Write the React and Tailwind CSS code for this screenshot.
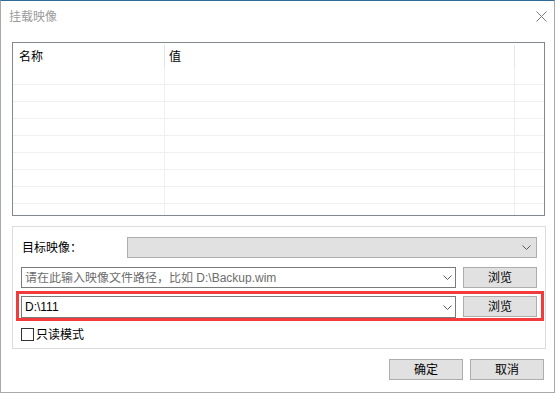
import React from 'react';

const rows = Array.from({ length: 8 });

const Chevron = () => (
  <svg width="9" height="5" viewBox="0 0 9 5" className="shrink-0">
    <path d="M0.5 0.5 L4.5 4.5 L8.5 0.5" fill="none" stroke="#5a5a5a" strokeWidth="1" />
  </svg>
);

const ComboBox = ({ value, placeholder, className = '' }) => (
  <div className={`flex items-center border border-[#7a7a7a] bg-white pl-[3px] pr-[3px] ${className}`}>
    <span className={`flex-1 truncate leading-none ${value ? 'text-black' : 'text-[#6d6d6d]'}`}>
      {value || placeholder}
    </span>
    <Chevron />
  </div>
);

const Button = ({ children, className = '' }) => (
  <button className={`w-[74px] h-[21px] border border-[#adadad] bg-[#e1e1e1] text-black leading-none ${className}`}>
    {children}
  </button>
);

const GridRow = ({ className = '', children }) => (
  <div className={`flex ${className}`}>
    <div className="w-[152px] border-r border-[#efefef] pl-[6px] flex items-center">{children?.[0]}</div>
    <div className="w-[350px] border-r border-[#efefef] pl-[4px] flex items-center">{children?.[1]}</div>
    <div className="flex-1" />
  </div>
);

export default function App() {
  return (
    <div className="w-[555px] h-[393px] bg-white border-x border-b border-[#a9a9a9] border-t border-t-[#2e6b98] flex flex-col text-[12px] font-['Liberation_Sans','Noto_Sans_CJK_SC',sans-serif]">
      {/* Title bar */}
      <div className="h-[31px] flex items-center justify-between pl-[8px] pr-[7px]">
        <span className="text-[#9a9a9a] leading-none">挂载映像</span>
        <svg width="11" height="11" viewBox="0 0 11 11">
          <path d="M0.5 0.5 L10.5 10.5 M10.5 0.5 L0.5 10.5" stroke="#7a7a7a" strokeWidth="1" />
        </svg>
      </div>

      {/* Property list */}
      <div className="ml-[11px] mt-[10px] w-[533px] h-[174px] border border-[#828790] flex flex-col">
        <div className="flex h-[25px] pt-[2px]">
          <div className="w-[152px] border-r border-[#e5e5e5] pl-[6px] flex items-center leading-none">名称</div>
          <div className="w-[350px] border-r border-[#e5e5e5] pl-[4px] flex items-center leading-none">值</div>
          <div className="flex-1" />
        </div>
        {rows.map((_, i) => (
          <GridRow key={i} className="h-[17px] border-b border-[#efefef]" />
        ))}
        <GridRow className="flex-1" />
      </div>

      {/* Options group */}
      <div className="ml-[11px] mt-[10px] w-[534px] h-[123px] border border-[#dcdcdc] pl-[8px] pr-[8px] pt-[10px] flex flex-col">
        <div className="flex items-center h-[21px]">
          <span className="w-[106px] pl-[1px] leading-none">目标映像：</span>
          <div className="flex-1 h-[21px] flex items-center justify-end pr-[5px] border border-[#adadad] bg-[#e1e1e1]">
            <Chevron />
          </div>
        </div>

        <div className="flex items-center gap-[7px] mt-[9px]">
          <ComboBox className="w-[435px] h-[21px]" placeholder="请在此输入映像文件路径，比如 D:\Backup.wim" />
          <Button>浏览</Button>
        </div>

        <div className="-ml-[5px] -mr-[7px] mt-[3px] h-[30px] border-[3px] border-[#f33b3b] flex items-start gap-[7px] pl-[2px] pt-[2px]">
          <ComboBox className="w-[435px] h-[22px]" value="D:\111" />
          <Button>浏览</Button>
        </div>

        <label className="flex items-center mt-[7px] h-[13px]">
          <span className="w-[13px] h-[13px] border border-[#333333] bg-white" />
          <span className="ml-[2px] leading-none">只读模式</span>
        </label>
      </div>

      {/* Dialog buttons */}
      <div className="flex justify-end gap-[7px] mt-[10px] pr-[10px]">
        <Button>确定</Button>
        <Button>取消</Button>
      </div>
    </div>
  );
}
